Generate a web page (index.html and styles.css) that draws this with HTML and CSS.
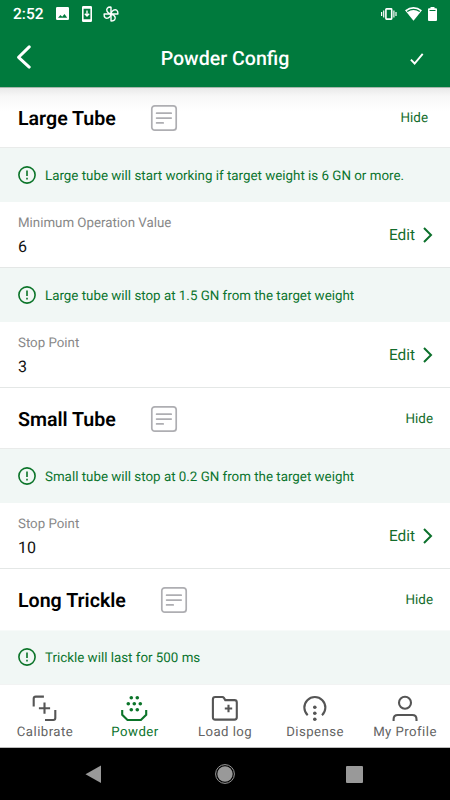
FILE: index.html
```html
<!DOCTYPE html>
<html lang="en">
<head>
<meta charset="utf-8">
<title>Powder Config</title>
<link rel="stylesheet" href="styles.css">
</head>
<body>
<svg class="defs" width="0" height="0" aria-hidden="true">
  <symbol id="note" viewBox="0 0 28 28"><rect x="1.8" y="1.8" width="24.4" height="24.4" rx="3"/><path d="M6.6 9.2h14.6M6.6 14.1h14.6M6.6 18.9h6.6"/></symbol>
  <symbol id="info" viewBox="0 0 18 18"><circle cx="9" cy="9" r="8.1"/><path d="M9 4.5v5.6M9 11.8v1.6"/></symbol>
  <symbol id="chevron" viewBox="0 0 10 16"><path d="M1 1l7 7-7 7"/></symbol>
</svg>
<header class="appbar">
  <div class="status">
    <span class="clock">2:52</span>
    <svg class="st-image" width="13" height="13" viewBox="0 0 13 13"><path fill="#fff" fill-rule="evenodd" d="M1.2 0h10.6Q13 0 13 1.2v10.6Q13 13 11.8 13H1.2Q0 13 0 11.8V1.2Q0 0 1.2 0zM2 10.7h9.2L8.5 7 6.2 9.8 4.5 8z"/></svg>
    <svg class="st-phone" width="10" height="16" viewBox="0 0 10 16"><path fill="#fff" fill-rule="evenodd" d="M1.3 0h7.4Q10 0 10 1.3v13.4Q10 16 8.7 16H1.3Q0 16 0 14.7V1.3Q0 0 1.3 0zM1.6 2.8v10.4h6.8V2.8z"/><path d="M5 4.5v5M2.8 7.8L5 10l2.2-2.2" fill="none" stroke="#fff" stroke-width="1.4"/></svg>
    <svg class="st-fan" width="16" height="16" viewBox="0 0 16 16" fill="none" stroke="#fff" stroke-width="1.4" stroke-linejoin="round"><path id="blade" d="M8 8V1.1C4.5.8 3 3 4.1 5.4 4.8 7 6.2 7.8 8 8z"/><use href="#blade" transform="rotate(90 8 8)"/><use href="#blade" transform="rotate(180 8 8)"/><use href="#blade" transform="rotate(270 8 8)"/></svg>
    <svg class="st-vibrate" width="16" height="12" viewBox="0 0 16 12" fill="none" stroke="#fff"><rect x="4.9" y=".9" width="5.8" height="10.2" rx=".6" stroke-width="1.6"/><path d="M.6 4v4M2.7 2.5v7M12.9 2.5v7M15 4v4" stroke-width="1.2"/></svg>
    <svg class="st-wifi" width="17" height="14" viewBox="0 0 17 14"><path fill="#fff" d="M0 3.2Q8.5-3 17 3.2L8.5 13.7z"/><path d="M2.2 4.6Q8.5.3 14.8 4.6" fill="none" stroke="#007a3d" stroke-width="1.2"/></svg>
    <svg class="st-battery" width="9" height="14" viewBox="0 0 9 14"><path fill="#fff" d="M2.5 0h4v1.3H8q1 0 1 1V13q0 1-1 1H1q-1 0-1-1V2.3q0-1 1-1h1.5z"/><path fill="#007a3d" d="M1.5 3h6v1h-6z"/></svg>
  </div>
  <div class="titlebar">
    <svg class="back" width="16" height="24" viewBox="0 0 16 24"><path d="M13.2 1.9L2.6 12.3l10.6 9.8" fill="none" stroke="#fff" stroke-width="3" stroke-linecap="round" stroke-linejoin="round"/></svg>
    <h1 class="title">Powder Config</h1>
    <svg class="done" width="14" height="12" viewBox="0 0 14 12"><path d="M.9 6.6l3.7 3.9L12.7.8" fill="none" stroke="#fff" stroke-width="1.9"/></svg>
  </div>
</header>
<main class="content">
  <section>
    <div class="heading first"><h2>Large Tube</h2><svg class="note"><use href="#note"/></svg><span class="hide">Hide</span></div>
    <div class="notice"><svg class="info"><use href="#info"/></svg><span>Large tube will start working if target weight is 6 GN or more.</span></div>
    <div class="row"><div class="field"><span class="label">Minimum Operation Value</span><span class="value">6</span></div><span class="edit">Edit</span><svg class="chevron"><use href="#chevron"/></svg></div>
    <div class="notice"><svg class="info"><use href="#info"/></svg><span>Large tube will stop at 1.5 GN from the target weight</span></div>
    <div class="row"><div class="field"><span class="label">Stop Point</span><span class="value">3</span></div><span class="edit">Edit</span><svg class="chevron"><use href="#chevron"/></svg></div>
  </section>
  <section>
    <div class="heading"><h2>Small Tube</h2><svg class="note"><use href="#note"/></svg><span class="hide">Hide</span></div>
    <div class="notice"><svg class="info"><use href="#info"/></svg><span>Small tube will stop at 0.2 GN from the target weight</span></div>
    <div class="row"><div class="field"><span class="label">Stop Point</span><span class="value">10</span></div><span class="edit">Edit</span><svg class="chevron"><use href="#chevron"/></svg></div>
  </section>
  <section>
    <div class="heading last"><h2>Long Trickle</h2><svg class="note"><use href="#note"/></svg><span class="hide">Hide</span></div>
    <div class="notice"><svg class="info"><use href="#info"/></svg><span>Trickle will last for 500 ms</span></div>
  </section>
</main>
<nav class="tabs">
  <div class="tab"><svg width="28" height="28" viewBox="0 0 28 28"><path d="M2.7 12.5V4.6q0-2 2-2h8.2M14 26h8.3q2 0 2-2v-7.9M13.5 8.6v11.2M7.9 14.2h11.2"/></svg><span>Calibrate</span></div>
  <div class="tab active"><svg width="28" height="28" viewBox="0 0 28 28"><path d="M1.2 16v4.7L6.5 26h13.4l5.3-5.3V16"/><g class="dots"><circle cx="10.3" cy="3.7" r="1.8"/><circle cx="16.3" cy="3.7" r="1.8"/><circle cx="7.3" cy="9.8" r="1.8"/><circle cx="13.3" cy="9.8" r="1.8"/><circle cx="19.3" cy="9.8" r="1.8"/><circle cx="10.3" cy="15.8" r="1.8"/><circle cx="16.3" cy="15.8" r="1.8"/></g></svg><span>Powder</span></div>
  <div class="tab"><svg width="28" height="28" viewBox="0 0 28 28"><path d="M4.2 3h7.1q1 0 1.6.9l1.4 2.2h9.2q2.3 0 2.3 2.3v14.8q0 2.4-2.4 2.4H4.2q-2.3 0-2.3-2.4V5.4Q1.9 3 4.2 3zM17.5 10.8v7.4M13.8 14.5h7.4"/></svg><span>Load log</span></div>
  <div class="tab"><svg width="28" height="28" viewBox="0 0 28 28"><path d="M6.7 21.2A10.5 10.5 0 1 1 21 21.2"/><g class="dots"><circle cx="13.8" cy="13.2" r="1.8"/><circle cx="13.8" cy="19.3" r="1.8"/><circle cx="13.8" cy="25.2" r="1.8"/></g></svg><span>Dispense</span></div>
  <div class="tab"><svg width="28" height="28" viewBox="0 0 28 28"><circle cx="14" cy="8.8" r="6"/><path d="M2.6 27v-1.8q0-4.2 4.2-4.2h14.5q4.2 0 4.2 4.2V27"/></svg><span>My Profile</span></div>
</nav>
<footer class="sysnav">
  <svg width="17" height="19" viewBox="0 0 17 19"><path d="M16 .5v17.4L.5 9.2z" fill="#999"/></svg>
  <svg width="20" height="20" viewBox="0 0 20 20"><circle cx="10" cy="10" r="7.7" fill="#999"/><circle cx="10" cy="10" r="9.4" fill="none" stroke="#999" stroke-width="1"/></svg>
  <svg width="17" height="17" viewBox="0 0 17 17"><rect width="17" height="17" rx="1" fill="#999"/></svg>
</footer>
</body>
</html>
```
FILE: styles.css
```css
* { box-sizing: border-box; }
body { margin: 0; width: 450px; height: 800px; overflow: hidden; background: #fff; font-family: Roboto, "Liberation Sans", sans-serif; font-weight: 400; display: flex; flex-direction: column; text-rendering: geometricPrecision; }
.defs { position: absolute; }
svg { display: block; flex: none; }
h1, h2 { margin: 0; white-space: nowrap; }
.appbar { height: 87px; background: #007a3d; color: #fff; flex: none; }
.status { height: 27px; display: flex; align-items: center; padding: 0 13px; }
.clock { width: 43px; font-size: 15.5px; font-weight: 500; line-height: 27px; padding-top: 1px; }
.st-phone { margin-left: 13px; }
.st-fan { margin-left: 11px; }
.st-vibrate { margin-left: auto; }
.st-wifi { margin-left: 8px; }
.st-battery { margin-left: 6px; }
.titlebar { height: 60px; display: grid; grid-template-columns: 50px 1fr 50px; align-items: center; }
.back { margin-left: 16px; }
.title { text-align: center; font-size: 19.6px; line-height: 24px; font-weight: 500; padding-top: 3px; }
.done { margin-left: 10px; margin-top: 3px; }
.content { height: 597px; flex: none; }
.heading { height: 61px; padding: 2px 17px 0 18px; border-bottom: 1px solid #e9ebea; display: flex; align-items: center; }
.heading.first { padding-top: 0; background: linear-gradient(#e9e9e9, #f7f7f7 8px, #fff 24px); border-top: 1px solid #a5b8ac; }
.heading.last { height: 62px; padding-top: 1px; border-bottom-color: #f7faf9; }
.heading h2 { font-size: 19.6px; font-weight: 600; line-height: 24px; color: #000; padding-top: 2px; }
.note { width: 28px; height: 28px; margin-left: 34px; fill: none; stroke: #aeaeb2; stroke-width: 1.7; stroke-linecap: round; }
.hide { margin-left: auto; color: #146c2c; font-size: 13.4px; line-height: 20px; padding-top: 2px; }
.heading.first .hide { margin-right: 5px; }
.notice { height: 54px; padding-left: 18px; background: #f1f7f5; display: flex; align-items: center; gap: 9px; color: #0b742d; font-size: 13.35px; white-space: nowrap; }
.notice span { padding-top: 2px; }
.heading.last + .notice { height: 53px; }
.heading.last + .notice .info { margin-top: -1px; }
.info { width: 18px; height: 18px; fill: none; stroke: #0b7429; stroke-width: 1.6; }
.row { height: 66px; padding: 0 17px 0 18px; border-bottom: 1px solid #e4e7e6; display: flex; align-items: center; }
.field { display: flex; flex-direction: column; }
.label { color: #888; font-size: 13.3px; line-height: 20px; padding-top: 1px; }
.value { color: #111; font-size: 16px; line-height: 20px; margin-top: 3px; }
.edit { margin-left: auto; color: #146c2c; font-size: 15.4px; line-height: 20px; padding-top: 1px; }
.chevron { width: 10px; height: 16px; margin-left: 8px; fill: none; stroke: #0b702b; stroke-width: 2; }
.tabs { height: 64px; flex: none; display: grid; grid-template-columns: repeat(5, 90px); background: #fff; border-top: 1px solid #f2f3f3; border-bottom: 1px solid #bbb; }
.tab { display: flex; flex-direction: column; align-items: center; padding-top: 9px; color: #636363; font-size: 13.2px; white-space: nowrap; letter-spacing: .45px; line-height: 20px; }
.tab span { padding-top: 1px; }
.tab svg { fill: none; stroke: #555; stroke-width: 2.1; }
.tab .dots { fill: #555; stroke: none; }
.tab.active { color: #0b742d; }
.tab.active svg { stroke: #0b7429; }
.tab.active .dots { fill: #0b7429; }
.sysnav { height: 52px; flex: none; background: #000; display: flex; align-items: center; padding-left: 85px; }
.sysnav svg + svg { margin-left: 113px; }
.sysnav svg:last-child { margin-left: 111px; }
```
